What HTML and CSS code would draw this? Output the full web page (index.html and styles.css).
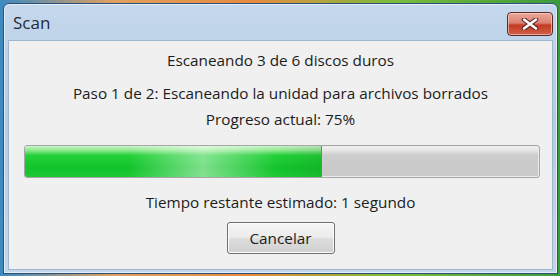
FILE: index.html
```html
<!DOCTYPE html>
<html>
<head>
<meta charset="utf-8">
<link rel="stylesheet" href="styles.css">
</head>
<body>
<div class="desktop">
  <div class="window">
    <div class="titlebar">
      <span class="title">Scan</span>
      <button class="close" aria-label="Cerrar">
        <svg width="18" height="12" viewBox="0 0 18 12">
          <path d="M3 1.5 L15 10.5 M15 1.5 L3 10.5" stroke="#5a2020" stroke-width="4.6" stroke-linecap="round"/>
          <path d="M3 1.5 L15 10.5 M15 1.5 L3 10.5" stroke="#ffffff" stroke-width="2.6" stroke-linecap="round"/>
        </svg>
      </button>
    </div>
    <div class="content">
      <p class="line l1">Escaneando 3 de 6 discos duros</p>
      <p class="line l2">Paso 1 de 2: Escaneando la unidad para archivos borrados</p>
      <p class="line l3">Progreso actual: 75%</p>
      <div class="progress">
        <div class="fill" style="width: 57.5%"></div>
      </div>
      <p class="line l4">Tiempo restante estimado: 1 segundo</p>
      <button class="cancel">Cancelar</button>
    </div>
  </div>
</div>
</body>
</html>
```
FILE: styles.css
```css
html, body {
  margin: 0;
  padding: 0;
}
body {
  width: 560px;
  height: 276px;
  overflow: hidden;
  font-family: "Open Sans", "Noto Sans", sans-serif;
}
.desktop {
  width: 560px;
  height: 276px;
  box-sizing: border-box;
  padding: 3px 2px 2px 3px;
  background: linear-gradient(90deg, #3c8ac0 0%, #e0a060 20%, #e88a40 45%, #7cbc3c 70%, #3c9a3c 100%);
}
.window {
  height: 100%;
  box-sizing: border-box;
  border: 1px solid #2c4f78;
  border-radius: 6px 6px 0 0;
  background: linear-gradient(180deg, #c5d8ec 0%, #b4cbe4 40%, #c3d6ea 100%);
  display: flex;
  flex-direction: column;
  padding: 0 4px 3px 4px;
  box-shadow: inset 0 0 0 1px #e4eef8;
}
.titlebar {
  height: 36px;
  display: flex;
  align-items: center;
  justify-content: space-between;
  padding: 0 0 0 5px;
}
.title {
  font-size: 17px;
  color: #1e2b3a;
  margin-top: 1px;
}
.close {
  width: 46px;
  height: 24px;
  margin-top: 3px;
  margin-right: 0;
  border: 1px solid #5a2a2a;
  border-radius: 4px;
  background: linear-gradient(180deg, #eaa89a 0%, #dc8272 45%, #c23a22 55%, #d06048 100%);
  box-shadow: inset 0 0 0 1px rgba(255,220,210,0.6);
  display: flex;
  align-items: center;
  justify-content: center;
  padding: 0;
}
.content {
  flex: 1;
  background: #f0f0f0;
  border: 1px solid #9fb6cf;
  display: flex;
  flex-direction: column;
  align-items: center;
  color: #1c1c1c;
}
.line {
  margin: 0;
  font-size: 15.3px;
  line-height: 20px;
}
.l1 { margin-top: 9px; }
.l2 { margin-top: 13px; }
.l3 { margin-top: 6px; }
.progress {
  margin-top: 16px;
  align-self: stretch;
  margin-left: 15px;
  margin-right: 12px;
  height: 33px;
  box-sizing: border-box;
  border: 1px solid #a6a6a6;
  border-radius: 3px;
  background: linear-gradient(180deg, #f2f2f2 0%, #e4e4e4 15%, #cccccc 30%, #c9c9c9 100%);
  box-shadow: inset 0 0 0 1px #ececec;
  overflow: hidden;
}
.fill {
  height: 100%;
  background:
    linear-gradient(90deg, rgba(255,255,255,0) 0%, rgba(255,255,255,0) 35%, rgba(255,255,255,0.45) 60%, rgba(255,255,255,0) 85%, rgba(0,0,0,0.08) 100%),
    linear-gradient(180deg, #c6f5c6 0%, #8ee88e 14%, #24d03a 30%, #12c42a 70%, #1ec836 100%);
  border-right: 1px solid #30b040;
}
.l4 { margin-top: 14px; }
.cancel {
  margin-top: 10px;
  width: 108px;
  height: 32px;
  border: 1px solid #707070;
  border-radius: 3px;
  background: linear-gradient(180deg, #f6f6f6 0%, #ebebeb 48%, #dddddd 52%, #d0d0d0 100%);
  box-shadow: inset 0 0 0 1px #fcfcfc;
  font-family: "Open Sans", "Noto Sans", sans-serif;
  font-size: 15.3px;
  color: #1c1c1c;
  padding: 0;
}
```
